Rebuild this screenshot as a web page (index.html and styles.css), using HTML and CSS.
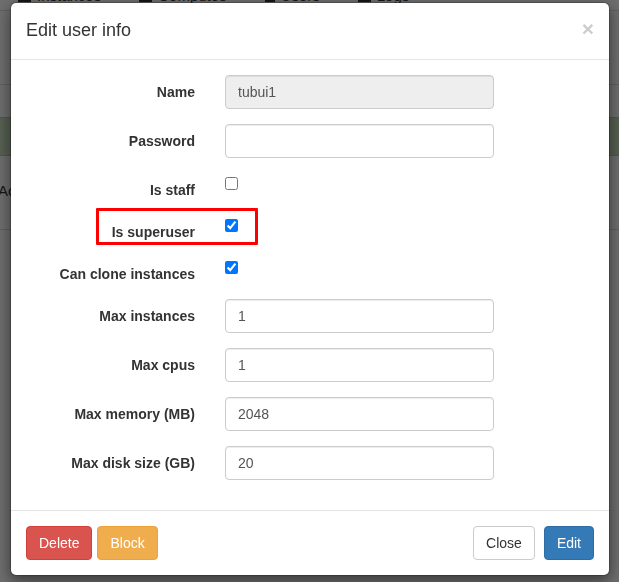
FILE: index.html
```html
<!DOCTYPE html>
<html>
<head>
<meta charset="utf-8">
<link rel="stylesheet" href="styles.css">
</head>
<body>
<div class="page">
  <nav class="topnav">
    <span class="nav-item"><span class="nav-icon"></span>Instances</span>
    <span class="nav-item"><span class="nav-icon"></span>Computes</span>
    <span class="nav-item"><span class="nav-icon solid"></span>Users</span>
    <span class="nav-item"><span class="nav-icon"></span>Logs</span>
  </nav>
  <div class="page-rule"></div>
  <div class="alert"></div>
  <div class="table-head">Actions</div>
  <div class="table-rule"></div>
</div>

<div class="backdrop"></div>

<div class="modal">
  <div class="dialog">
    <div class="modal-header">
      <h4 class="modal-title">Edit user info</h4>
      <span class="close">×</span>
    </div>
    <div class="modal-body">
      <form class="form">
        <div class="row">
          <label class="control-label">Name</label>
          <input class="control" type="text" value="tubui1" disabled>
        </div>
        <div class="row">
          <label class="control-label">Password</label>
          <input class="control" type="password" value="">
        </div>
        <div class="row check-row">
          <label class="control-label">Is staff</label>
          <div><input class="check" type="checkbox"></div>
        </div>
        <div class="row check-row">
          <label class="control-label">Is superuser</label>
          <div><input class="check" type="checkbox" checked></div>
        </div>
        <div class="row check-row">
          <label class="control-label">Can clone instances</label>
          <div><input class="check" type="checkbox" checked></div>
        </div>
        <div class="row">
          <label class="control-label">Max instances</label>
          <input class="control" type="text" value="1">
        </div>
        <div class="row">
          <label class="control-label">Max cpus</label>
          <input class="control" type="text" value="1">
        </div>
        <div class="row">
          <label class="control-label">Max memory (MB)</label>
          <input class="control" type="text" value="2048">
        </div>
        <div class="row">
          <label class="control-label">Max disk size (GB)</label>
          <input class="control" type="text" value="20">
        </div>
      </form>
      <div class="highlight"></div>
    </div>
    <div class="modal-footer">
      <div class="btn-group-left">
        <button class="btn btn-danger" type="button">Delete</button>
        <button class="btn btn-warning" type="button">Block</button>
      </div>
      <div class="btn-group-right">
        <button class="btn btn-default" type="button">Close</button>
        <button class="btn btn-primary" type="button">Edit</button>
      </div>
    </div>
  </div>
</div>
</body>
</html>
```

FILE: styles.css
```css
* {
  box-sizing: border-box;
}

html, body {
  margin: 0;
  padding: 0;
  height: 100%;
  overflow: hidden;
}

body {
  font-family: "Liberation Sans", Arial, sans-serif;
  font-size: 14px;
  line-height: 1.42857;
  color: #333;
  background: #fff;
}

/* page behind the modal */
.page {
  position: relative;
}

.topnav {
  display: flex;
  height: 23px;
  padding-left: 18px;
  border-bottom: 1px solid #ddd;
  margin-top: -12px;
  font-size: 15px;
  color: #333;
}

.nav-item {
  display: flex;
  align-items: center;
  gap: 6px;
  margin-right: 38px;
  height: 16px;
}

.nav-icon {
  display: inline-block;
  width: 13px;
  height: 12px;
  border: 2px solid #333;
}

.nav-icon.solid {
  width: 10px;
  background: #222;
}

.page-rule {
  height: 1px;
  background: #ddd;
  margin-top: 73px;
}

.alert {
  height: 39px;
  margin-top: 32px;
  background: #c9dfbf;
  border-top: 1px solid #b2d0a2;
  border-bottom: 1px solid #b2d0a2;
}

.table-head {
  margin-top: 24px;
  margin-left: -2px;
  font-size: 15px;
}

.table-rule {
  height: 1px;
  background: #ddd;
  margin-top: 28px;
}

.backdrop {
  position: fixed;
  inset: 0;
  background: rgba(0, 0, 0, 0.57);
}

/* modal */
.modal {
  position: fixed;
  inset: 0;
}

.dialog {
  width: 600px;
  margin: 2px 0 0 10px;
  background: #fff;
  border: 1px solid rgba(0, 0, 0, 0.2);
  border-radius: 6px;
  box-shadow: 0 5px 15px rgba(0, 0, 0, 0.5);
  background-clip: padding-box;
}

.modal-header {
  display: flex;
  justify-content: space-between;
  align-items: flex-start;
  padding: 15px;
  border-bottom: 1px solid #e5e5e5;
}

.modal-title {
  margin: 0;
  font-size: 18px;
  font-weight: normal;
  line-height: 1.42857;
  color: #333;
}

.close {
  font-size: 21px;
  font-weight: bold;
  line-height: 1;
  color: #000;
  opacity: 0.2;
  margin-top: 0;
  margin-right: 0;
}

.modal-body {
  position: relative;
  padding: 15px;
}

.form {
  display: flex;
  flex-direction: column;
  gap: 15px;
  padding-bottom: 15px;
}

.row {
  display: grid;
  grid-template-columns: 169px 269px;
  column-gap: 30px;
  align-items: start;
}

.control-label {
  text-align: right;
  font-weight: bold;
  padding-top: 8px;
  color: #333;
}

.control {
  display: block;
  width: 269px;
  height: 34px;
  padding: 6px 12px;
  font-family: "Liberation Sans", Arial, sans-serif;
  font-size: 14px;
  line-height: 1.42857;
  color: #555;
  background: #fff;
  border: 1px solid #ccc;
  border-radius: 4px;
  box-shadow: inset 0 1px 1px rgba(0, 0, 0, 0.075);
  outline: none;
}

.control:disabled {
  background: #eee;
  color: #555;
  opacity: 1;
}

.check {
  margin: 4px 0 0 0;
  width: 13px;
  height: 13px;
}

.check-row .control-label {
  padding-top: 7px;
  margin-top: 1px;
  margin-bottom: -1px;
}

.highlight {
  position: absolute;
  left: 85px;
  top: 148px;
  width: 162px;
  height: 37px;
  border: 3px solid #f00;
  border-radius: 1px;
  pointer-events: none;
}

.modal-footer {
  display: flex;
  justify-content: space-between;
  padding: 15px;
  border-top: 1px solid #e5e5e5;
}

.btn-group-left {
  display: flex;
  gap: 5px;
}

.btn-group-right {
  display: flex;
  gap: 9px;
}

.btn {
  display: inline-block;
  height: 34px;
  padding: 7px 12px 5px;
  font-family: "Liberation Sans", Arial, sans-serif;
  font-size: 14px;
  line-height: 1.42857;
  border: 1px solid transparent;
  border-radius: 4px;
  cursor: pointer;
}

.btn-danger {
  color: #fff;
  background: #d9534f;
  border-color: #d43f3a;
}

.btn-warning {
  color: #fff;
  background: #f0ad4e;
  border-color: #eea236;
}

.btn-default {
  color: #333;
  background: #fff;
  border-color: #ccc;
}

.btn-primary {
  color: #fff;
  background: #337ab7;
  border-color: #2e6da4;
}
```
